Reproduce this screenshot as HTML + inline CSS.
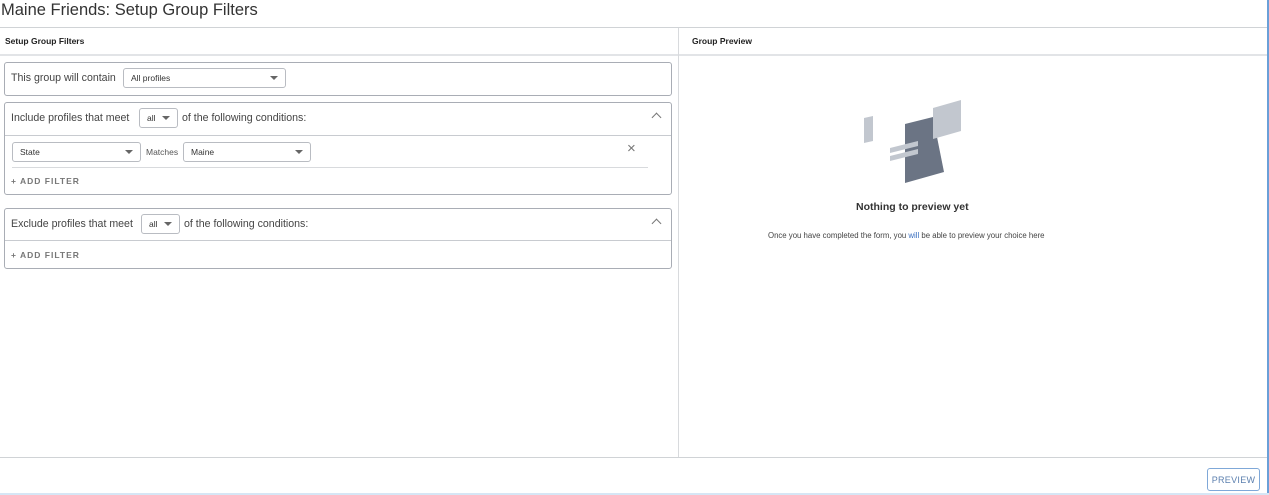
<!DOCTYPE html>
<html><head><style>
*{margin:0;padding:0;box-sizing:border-box}
body{width:1269px;height:495px;position:relative;background:#fff;font-family:"Liberation Sans",sans-serif;color:#333;overflow:hidden}
.a{position:absolute}
.box{position:absolute;border:1px solid #a9adb5;border-radius:3px;left:4px;width:668px}
.sel{position:absolute;border:1px solid #b9bcc2;border-radius:3px;font-size:8.5px;color:#333;padding-left:7px;display:flex;align-items:center}
.sel:after{content:"";position:absolute;right:7px;top:50%;margin-top:-2px;border-left:4px solid transparent;border-right:4px solid transparent;border-top:4px solid #666}
.t{font-size:10.6px;color:#444;position:absolute;white-space:nowrap}
.add{position:absolute;font-size:8.5px;letter-spacing:1px;color:#777;font-weight:bold}
.hl{position:absolute;height:1px;background:#d8dadd}
.chev{position:absolute;width:7px;height:7px;border-left:1.3px solid #777;border-top:1.3px solid #777;transform:rotate(45deg)}
</style></head><body>
<div class="a" style="left:1px;top:1px;font-size:16.5px;color:#333">Maine Friends: Setup Group Filters</div>
<div class="hl" style="left:0;top:27px;width:1267px;background:#d0d3d6"></div>
<div class="a" style="left:5px;top:36px;font-size:8.5px;font-weight:bold;color:#222">Setup Group Filters</div>
<div class="a" style="left:692px;top:36px;font-size:8.5px;font-weight:bold;color:#222">Group Preview</div>
<div class="hl" style="left:0;top:54px;width:1267px;height:2px;background:#e2e4e7"></div>
<div class="a" style="left:678px;top:28px;width:1px;height:429px;background:#d8dadd"></div>
<div class="hl" style="left:0;top:457px;width:1267px;background:#d0d3d6"></div>
<div class="a" style="left:1267px;top:0;width:2px;height:495px;background:#6aa0d8"></div>
<div class="a" style="left:0;top:493px;width:1269px;height:2px;background:#d6e6f5"></div>

<div class="box" style="top:62px;height:34px"></div>
<div class="t" style="left:11px;top:72px">This group will contain</div>
<div class="sel" style="left:123px;top:68px;width:163px;height:20px">All profiles</div>

<div class="box" style="top:102px;height:93px"></div>
<div class="t" style="left:11px;top:112px">Include profiles that meet</div>
<div class="sel" style="left:139px;top:108px;width:39px;height:20px">all</div>
<div class="t" style="left:182px;top:112px">of the following conditions:</div>
<div class="chev" style="left:653px;top:114px"></div>
<div class="hl" style="left:5px;top:135px;width:666px;background:#c8cbd0"></div>
<div class="sel" style="left:12px;top:142px;width:129px;height:20px">State</div>
<div class="a" style="left:146px;top:147px;font-size:8.5px;color:#555">Matches</div>
<div class="sel" style="left:183px;top:142px;width:128px;height:20px">Maine</div>
<div class="a" style="left:627px;top:140px;font-size:15px;color:#777">×</div>
<div class="hl" style="left:12px;top:167px;width:636px"></div>
<div class="add" style="left:11px;top:176px">+ ADD FILTER</div>

<div class="box" style="top:208px;height:61px"></div>
<div class="t" style="left:11px;top:218px">Exclude profiles that meet</div>
<div class="sel" style="left:141px;top:214px;width:39px;height:20px">all</div>
<div class="t" style="left:184px;top:218px">of the following conditions:</div>
<div class="chev" style="left:653px;top:220px"></div>
<div class="hl" style="left:5px;top:240px;width:666px;background:#c8cbd0"></div>
<div class="add" style="left:11px;top:250px">+ ADD FILTER</div>

<svg class="a" style="left:0;top:0" width="1269" height="495">
<polygon points="864,118 873,116 873,141 864,143" fill="#c2c7cf"/>
<polygon points="905,124 933,117 944,172 905,183" fill="#6b7484"/>
<polygon points="933,108 961,100 961,131 933,139" fill="#c2c7cf"/>
<polygon points="890,148 918,141 918,146 890,153" fill="#c2c7cf"/>
<polygon points="890,156 918,149 918,154 890,161" fill="#c2c7cf"/>
</svg>
<div class="a" style="left:856px;top:201px;font-size:10.5px;font-weight:bold;color:#333">Nothing to preview yet</div>
<div class="a" style="left:768px;top:231px;font-size:7.8px;color:#444">Once you have completed the form, you <span style="color:#3a6fc0">will</span> be able to preview your choice here</div>
<div class="a" style="left:1207px;top:468px;width:53px;height:23px;border:1px solid #7fa8d8;border-radius:3px;font-size:9px;color:#5b7fae;display:flex;align-items:center;justify-content:center;letter-spacing:.3px">PREVIEW</div>
</body></html>
